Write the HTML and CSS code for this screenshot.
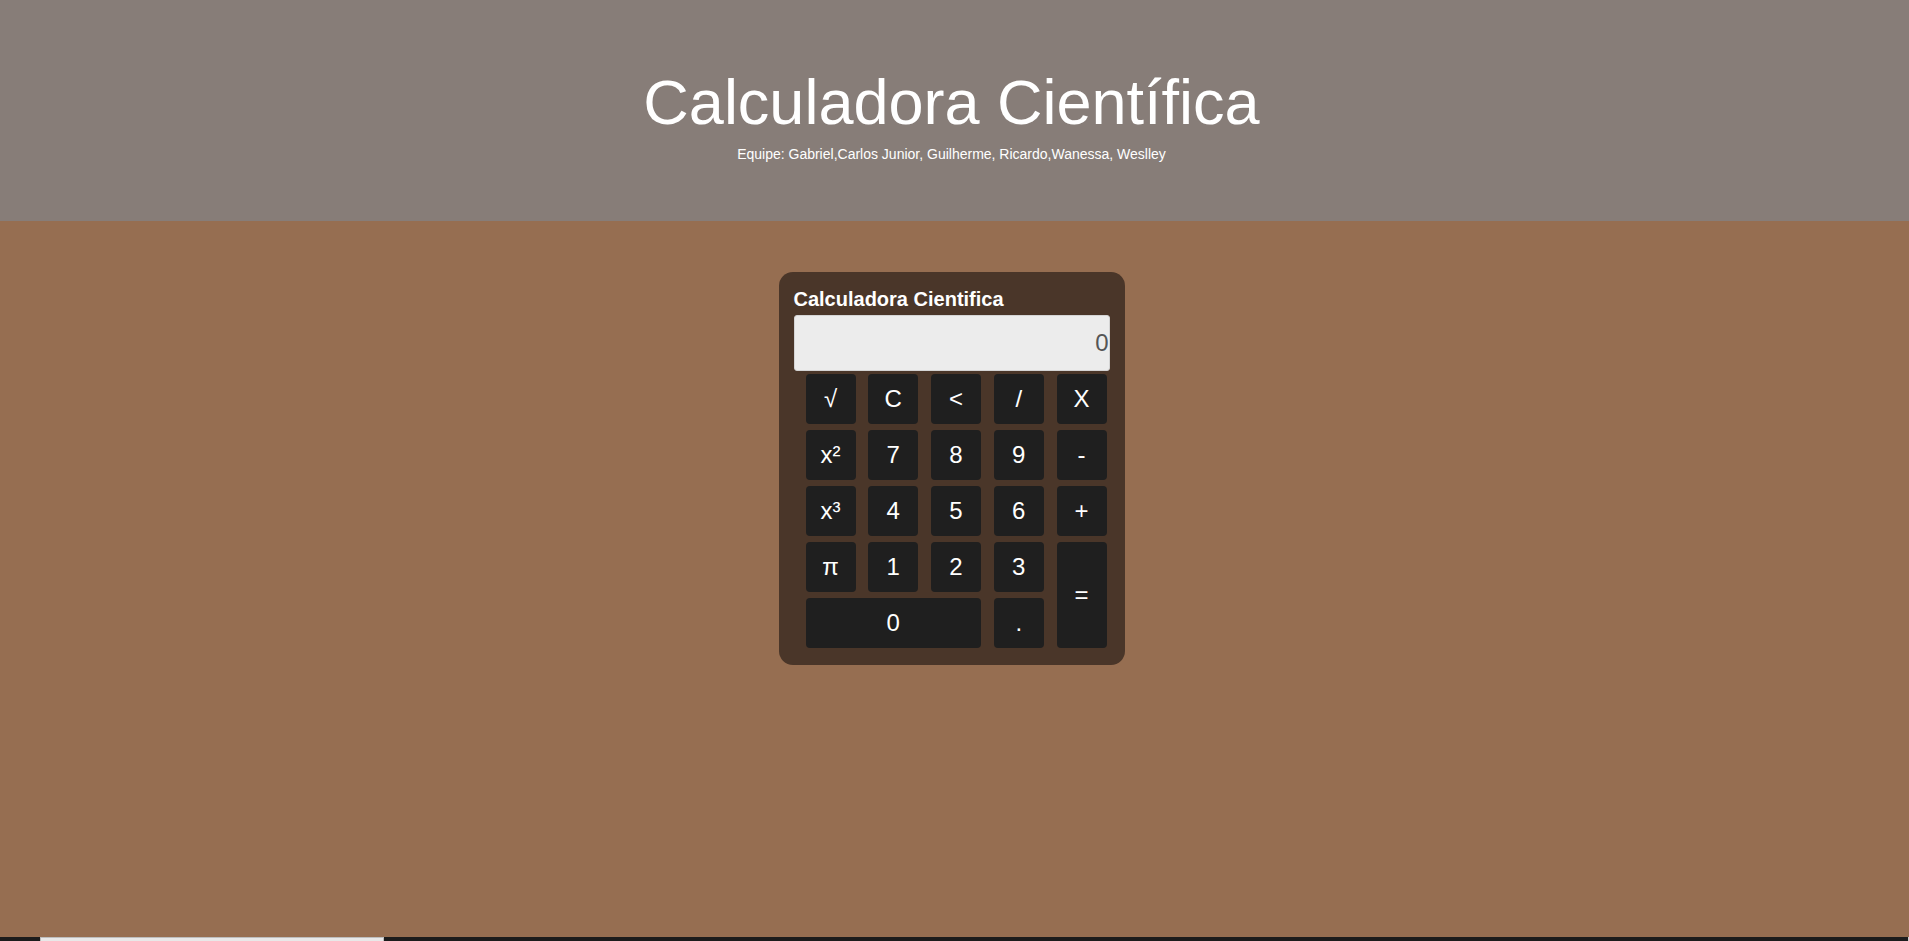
FILE: index.html
```html
<!DOCTYPE html>
<html lang="pt-BR">
<head>
<meta charset="utf-8">
<title>Calculadora Científica</title>
<link rel="stylesheet" href="styles.css">
</head>
<body>
<header class="topo">
  <h1 class="titulo">Calculadora Científica</h1>
  <p class="equipe">Equipe: Gabriel,Carlos Junior, Guilherme, Ricardo,Wanessa, Weslley</p>
</header>
<main class="conteudo">
  <section class="calc">
    <h2 class="calc-titulo">Calculadora Cientifica</h2>
    <div class="visor">0</div>
    <div class="teclas">
      <button class="tecla">√</button>
      <button class="tecla">C</button>
      <button class="tecla">&lt;</button>
      <button class="tecla">/</button>
      <button class="tecla">X</button>
      <button class="tecla">x²</button>
      <button class="tecla">7</button>
      <button class="tecla">8</button>
      <button class="tecla">9</button>
      <button class="tecla">-</button>
      <button class="tecla">x³</button>
      <button class="tecla">4</button>
      <button class="tecla">5</button>
      <button class="tecla">6</button>
      <button class="tecla">+</button>
      <button class="tecla">π</button>
      <button class="tecla">1</button>
      <button class="tecla">2</button>
      <button class="tecla">3</button>
      <button class="tecla tecla-igual">=</button>
      <button class="tecla tecla-zero">0</button>
      <button class="tecla">.</button>
    </div>
  </section>
</main>
<div class="barra"><div class="barra-polegar"></div><div class="barra-fim"></div></div>
</body>
</html>
```
FILE: styles.css
```css
* { box-sizing: border-box; }
html, body { margin: 0; padding: 0; height: 100%; }
body {
  font-family: "Liberation Sans", Arial, sans-serif;
  display: flex;
  flex-direction: column;
  min-height: 100vh;
  background: #966e51;
  overflow: hidden;
}
.topo {
  background: #877d78;
  height: 221px;
  display: flex;
  flex-direction: column;
  align-items: center;
  padding-top: 66px;
  padding-right: 6px;
  color: #fff;
}
.titulo {
  margin: 0;
  font-weight: normal;
  font-size: 63px;
  line-height: 72px;
}
.equipe {
  margin: 0;
  margin-top: 8px;
  font-size: 14px;
  line-height: 16px;
}
.conteudo {
  flex: 1;
  display: flex;
  justify-content: center;
  align-items: flex-start;
  padding-top: 51px;
  padding-right: 6px;
}
.calc {
  width: 346px;
  background: #4a3629;
  border-radius: 14px;
  padding: 16px 15px 17px 15px;
}
.calc-titulo {
  margin: 0 0 4px 0;
  color: #fff;
  font-size: 20px;
  line-height: 23px;
  font-weight: bold;
}
.visor {
  height: 56px;
  background: #ececec;
  border: 1px solid #d4d4d4;
  border-radius: 3px;
  text-align: right;
  color: #555;
  font-size: 24px;
  line-height: 54px;
  padding-right: 0;
}
.teclas {
  margin-top: 3px;
  padding-left: 12px;
  display: grid;
  grid-template-columns: repeat(5, 50px);
  grid-auto-rows: 50px;
  column-gap: 12.75px;
  row-gap: 6px;
}
.tecla {
  border: none;
  border-radius: 4px;
  background: #1f1f1f;
  color: #fff;
  font-family: "Liberation Sans", Arial, sans-serif;
  font-size: 24px;
  padding: 0;
}
.tecla-igual {
  grid-column: 5;
  grid-row: 4 / span 2;
}
.tecla-zero {
  grid-column: 1 / span 3;
}
.barra {
  height: 4px;
  background: #1c1c1c;
  display: flex;
}
.barra-polegar {
  margin-left: 40px;
  width: 344px;
  background: #e8e8e8;
  border: 1px solid #bdbdbd;
  border-bottom: none;
}
.barra-fim {
  margin-left: auto;
  width: 1px;
  background: #cfcfcf;
}
```
